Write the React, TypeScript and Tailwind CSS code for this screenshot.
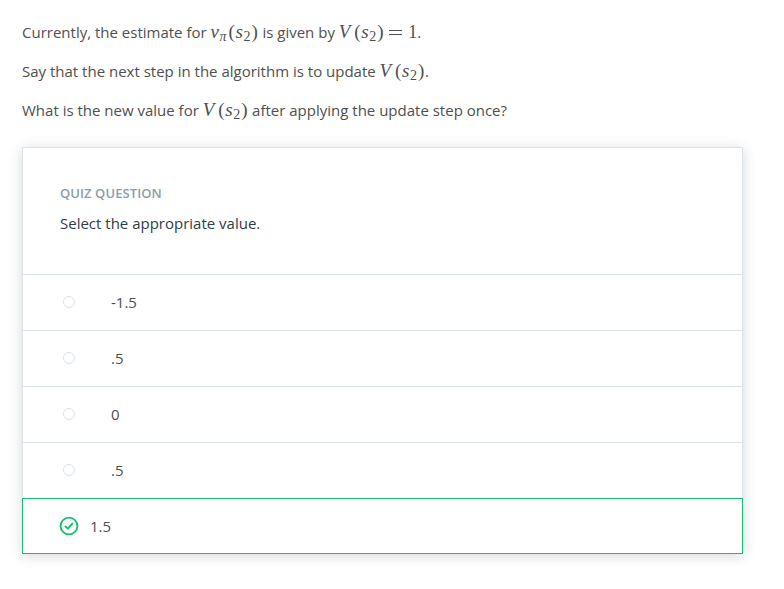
import type { ReactNode } from 'react';

const mathFont = "font-['Liberation_Serif',serif]";

function Cell({ className, children }: { className: string; children: ReactNode }) {
  return <span className={`inline-block whitespace-nowrap text-left leading-none ${className}`}>{children}</span>;
}

/* The parenthesised state s₂ */
function State() {
  return (
    <>
      <Cell className="w-[7px] text-[19px]">(</Cell>
      <Cell className="w-[8px] text-[19px] italic">s</Cell>
      <Cell className="relative top-[3px] w-[8px] text-[14px]">2</Cell>
      <Cell className="w-[7px] text-[19px]">)</Cell>
    </>
  );
}

function Value() {
  return (
    <span className={mathFont}>
      <Cell className="w-[15.5px] text-[19px] italic">V</Cell>
      <State />
    </span>
  );
}

function Option({ label }: { label: string }) {
  return (
    <label className="flex h-14 items-center border-t border-[#dbe2e8] pb-[2px] pl-10">
      <span className="size-3 rounded-full border border-[#dbe2e8]" />
      <span className="pl-9 text-[#4f4f4f]">{label}</span>
    </label>
  );
}

export default function App() {
  return (
    <main className="h-[589px] overflow-hidden bg-white px-[22px] pt-[17px] font-['Open_Sans',sans-serif] text-[15px] leading-[30px] text-[#4f4f4f]">
      <div className="flex flex-col gap-[9px] whitespace-nowrap">
        <p className="h-[30px]">
          Currently, the estimate for{' '}
          <span className={mathFont}>
            <Cell className="w-[9px] text-[19px] italic">v</Cell>
            <Cell className="relative top-[3px] w-[9px] text-[14px] italic">π</Cell>
            <State />
          </span>{' '}
          is given by <Value />
          <span className={mathFont}>
            <Cell className="ml-[5px] w-[14px]">
              <svg className="h-[9px] w-[13px]" viewBox="0 0 13 9" stroke="currentColor">
                <path d="M0 1.5h13M0 5.5h13" />
              </svg>
            </Cell>
            <Cell className="ml-[5px] w-[9px] text-[18px]">1</Cell>
          </span>
          .
        </p>
        <p className="h-[30px]">
          Say that the next step in the algorithm is to update <Value />.
        </p>
        <p className="h-[30px]">
          What is the new value for <Value /> after applying the update step once?
        </p>
      </div>

      <section className="mt-[22px] h-[407px] w-[721px] bg-white shadow-[0_2px_12px_rgba(46,61,73,0.2)]">
        <div className="h-[351px] border border-b-0 border-[#dbe2e8]">
          <header className="h-[126px] pt-[33px] pl-[37px]">
            <h2 className="text-[13px] leading-6 font-semibold tracking-[0.08px] text-[#8c9cad]">QUIZ QUESTION</h2>
            <p className="pt-[3px] text-[#2e3d49]">Select the appropriate value.</p>
          </header>
          <Option label="-1.5" />
          <Option label=".5" />
          <Option label="0" />
          <Option label=".5" />
        </div>
        <label className="flex h-14 items-center border border-[#15c26b] pl-9">
          <svg className="size-5" viewBox="-0.5 -0.5 20 20" fill="none" stroke="#15c26b" strokeWidth="2">
            <circle cx="9.5" cy="9.5" r="8.4" strokeWidth="1.8" />
            <path d="m6 10 2.4 2.1 4.4-5" strokeLinecap="round" strokeLinejoin="round" />
          </svg>
          <span className="pl-[11px]">1.5</span>
        </label>
      </section>
    </main>
  );
}
